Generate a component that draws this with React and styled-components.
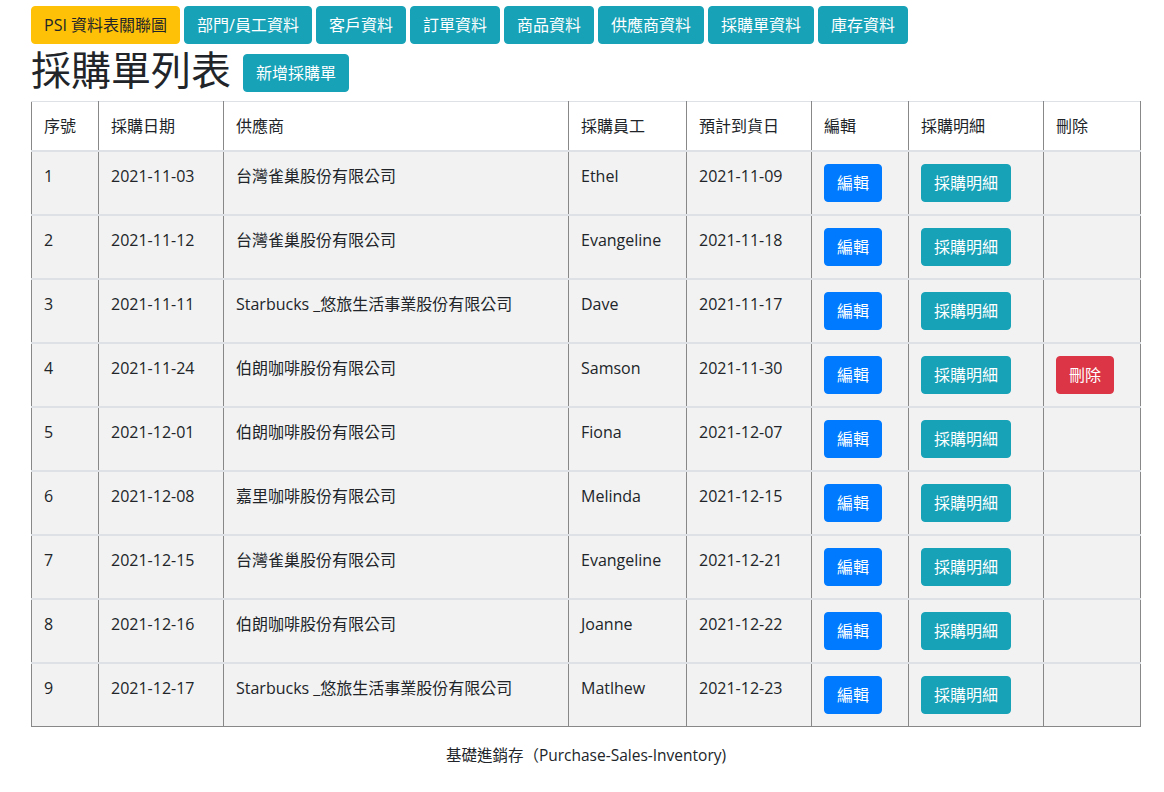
import React from 'react';
import styled, { createGlobalStyle } from 'styled-components';

const Global = createGlobalStyle`
  body {
    margin: 0;
    background: #fff;
    color: #212529;
    font-family: "Open Sans", "Noto Sans CJK TC", sans-serif;
    font-size: 16px;
    line-height: 1.5;
  }
`;

const Page = styled.div`
  width: 1110px;
  padding: 6px 0 0 31px;
`;

const Nav = styled.nav`
  display: flex;
  gap: 4px;
`;

const COLORS = {
  info: ['#17a2b8', '#fff'],
  warning: ['#ffc107', '#212529'],
  primary: ['#007bff', '#fff'],
  danger: ['#dc3545', '#fff'],
};

const Btn = styled.button`
  display: inline-block;
  font-family: inherit;
  font-size: 16px;
  line-height: 24px;
  padding: 6px 12px;
  border: 1px solid ${p => COLORS[p.variant][0]};
  border-radius: 4px;
  background: ${p => COLORS[p.variant][0]};
  color: ${p => COLORS[p.variant][1]};
  cursor: pointer;
  white-space: nowrap;
`;

const TitleRow = styled.div`
  display: flex;
  align-items: flex-end;
  gap: 12px;
  margin: 2px 0 7px;
`;

const Title = styled.h1`
  margin: 0;
  font-size: 40px;
  font-weight: 400;
  line-height: 48px;
`;

const AddBtn = styled(Btn)`
  margin-bottom: 2px;
`;

const Table = styled.table`
  width: 1109px;
  table-layout: fixed;
  border-collapse: collapse;
  border-left: 1px solid #888;
  border-right: 1px solid #888;
  border-bottom: 1px solid #888;
`;

const Th = styled.th`
  text-align: left;
  font-weight: 400;
  padding: 12px;
  background: #fff;
  border-top: 1px solid #dee2e6;
  border-left: 1px solid #888;
  border-right: 1px solid #888;
  vertical-align: top;
`;

const Td = styled.td`
  padding: 12px;
  background: #f2f2f2;
  border-top: 2px solid #dee2e6;
  border-left: 1px solid #888;
  border-right: 1px solid #888;
  vertical-align: top;
`;

const Footer = styled.footer`
  text-align: center;
  margin-top: 17px;
  font-size: 15.5px;
`;

const WIDTHS = [67, 125, 345, 118, 125, 97, 135, 97];
const HEADS = ['序號', '採購日期', '供應商', '採購員工', '預計到貨日', '編輯', '採購明細', '刪除'];
const NAV = ['部門/員工資料', '客戶資料', '訂單資料', '商品資料', '供應商資料', '採購單資料', '庫存資料'];

const ROWS = [
  [1, '2021-11-03', '台灣雀巢股份有限公司', 'Ethel', '2021-11-09'],
  [2, '2021-11-12', '台灣雀巢股份有限公司', 'Evangeline', '2021-11-18'],
  [3, '2021-11-11', 'Starbucks _悠旅生活事業股份有限公司', 'Dave', '2021-11-17'],
  [4, '2021-11-24', '伯朗咖啡股份有限公司', 'Samson', '2021-11-30', true],
  [5, '2021-12-01', '伯朗咖啡股份有限公司', 'Fiona', '2021-12-07'],
  [6, '2021-12-08', '嘉里咖啡股份有限公司', 'Melinda', '2021-12-15'],
  [7, '2021-12-15', '台灣雀巢股份有限公司', 'Evangeline', '2021-12-21'],
  [8, '2021-12-16', '伯朗咖啡股份有限公司', 'Joanne', '2021-12-22'],
  [9, '2021-12-17', 'Starbucks _悠旅生活事業股份有限公司', 'Matlhew', '2021-12-23'],
];

export default function App() {
  return (
    <Page>
      <Global />
      <Nav>
        <Btn variant="warning">PSI 資料表關聯圖</Btn>
        {NAV.map(n => <Btn key={n} variant="info">{n}</Btn>)}
      </Nav>
      <TitleRow>
        <Title>採購單列表</Title>
        <AddBtn variant="info">新增採購單</AddBtn>
      </TitleRow>
      <Table>
        <colgroup>
          {WIDTHS.map((w, i) => <col key={i} style={{ width: w }} />)}
        </colgroup>
        <thead>
          <tr>{HEADS.map(h => <Th key={h}>{h}</Th>)}</tr>
        </thead>
        <tbody>
          {ROWS.map(([id, date, vendor, staff, due, canDelete]) => (
            <tr key={id}>
              <Td>{id}</Td>
              <Td>{date}</Td>
              <Td>{vendor}</Td>
              <Td>{staff}</Td>
              <Td>{due}</Td>
              <Td><Btn variant="primary">編輯</Btn></Td>
              <Td><Btn variant="info">採購明細</Btn></Td>
              <Td>{canDelete && <Btn variant="danger">刪除</Btn>}</Td>
            </tr>
          ))}
        </tbody>
      </Table>
      <Footer>基礎進銷存（Purchase-Sales-Inventory)</Footer>
    </Page>
  );
}
